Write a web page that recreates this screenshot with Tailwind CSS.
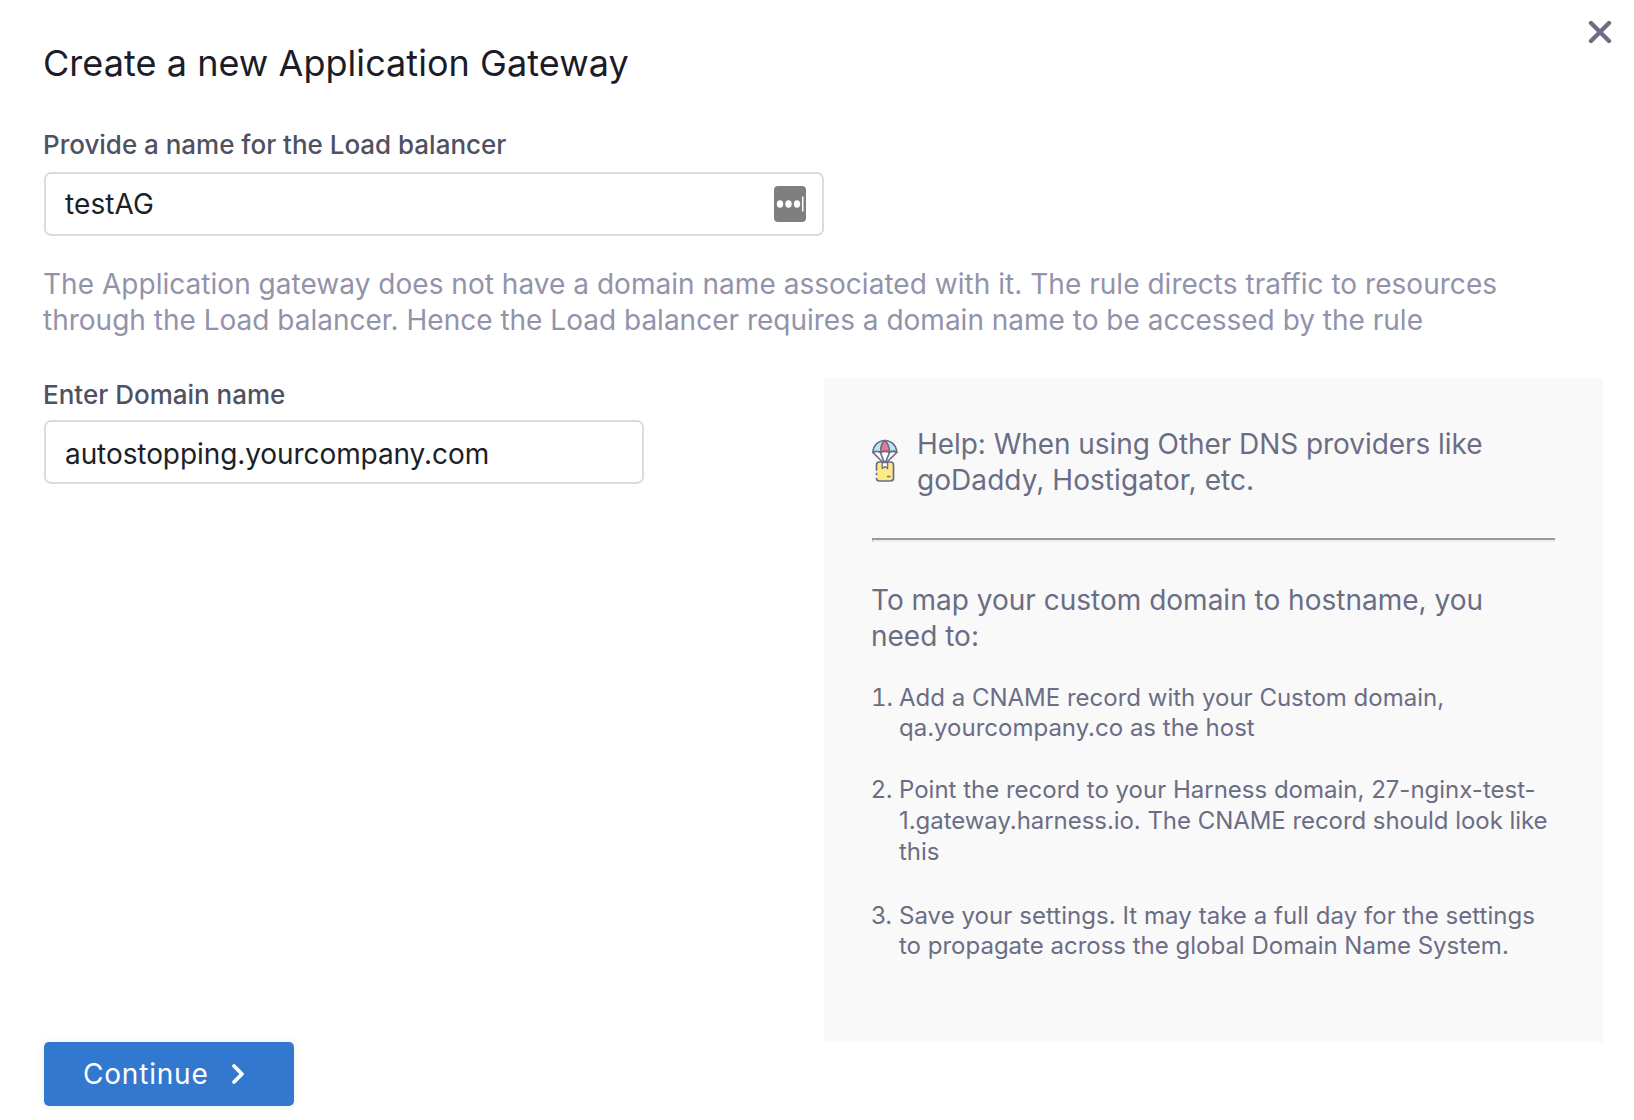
<!DOCTYPE html>
<html lang="en">
<head>
<meta charset="utf-8">
<title>Create a new Application Gateway</title>
<script src="https://cdn.jsdelivr.net/npm/@tailwindcss/browser@4"></script>
</head>
<body class="bg-white font-['Inter',sans-serif] text-[28px] leading-9 text-[#6b6d85]">
<main class="relative flex h-[1120px] w-[1634px] flex-col items-start overflow-hidden pl-11 pr-[30px] pt-[41px]">
  <button aria-label="Close" class="absolute right-[22px] top-5">
    <svg class="size-6" viewBox="0 0 24 24" fill="none" stroke="#6b6d85" stroke-width="4.4" stroke-linecap="round"><path d="M3 3 21 21M21 3 3 21"/></svg>
  </button>

  <h1 class="-ml-px text-[36px] leading-[44px] tracking-[0.05px] text-[#1c1c28]">Create a new Application Gateway</h1>

  <label class="-ml-px mt-11 text-[26px] font-medium leading-8 tracking-[-0.02px] text-[#4f5162]">Provide a name for the Load balancer</label>
  <div class="mt-[11px] flex h-16 w-[780px] items-center justify-between rounded-[7px] border-2 border-[#d9dae5] pl-[19px] pr-4 text-[#1c2127]">
    <span class="tracking-[0.1px]">testAG</span>
    <svg class="h-9 w-8" viewBox="0 0 32 36"><rect width="32" height="36" rx="4" fill="#7f7f7f"/><g fill="#fff"><ellipse cx="6" cy="18" rx="3.2" ry="3.8"/><ellipse cx="14.5" cy="18" rx="3.2" ry="3.8"/><ellipse cx="23" cy="18" rx="3.2" ry="3.8"/><rect x="28" y="10.500" width="1.500" height="15"/></g></svg>
  </div>

  <p class="-ml-px mt-[30px] text-[#9293ab]"><span class="tracking-[0.03px]">The Application gateway does not have a domain name associated with it. The rule directs traffic to resources</span><br>through the Load balancer. Hence the Load balancer requires a domain name to be accessed by the rule</p>

  <div class="mt-10 flex h-[664px] w-[1560px]">
    <div class="flex w-[780px] flex-col">
      <label class="-ml-px mt-px text-[26px] font-medium leading-8 text-[#4f5162]">Enter Domain name</label>
      <div class="mt-[9px] flex h-16 w-[600px] items-center rounded-[7px] border-2 border-[#d9dae5] pl-[19px] pt-1 tracking-[-0.08px] text-[#1c2127]">autostopping.yourcompany.com</div>
    </div>
    <aside class="w-[779px] shrink-0 bg-[#f9f9f9] px-12 pt-12">
      <div class="flex h-[72px] items-start">
        <svg class="mt-[13px] h-[44px] w-[26px] shrink-0" viewBox="0 0 26 44" fill="none" stroke="#6b6d85" stroke-width="1.700" stroke-linejoin="round" stroke-linecap="round">
          <path fill="#b9e9f8" d="M1 13.500C1 6.500 6.500 1.500 12.800 1.500s11.900 5 11.900 12c-2-1.300-5.200-1.300-7.200 0-2.500-1.300-6.500-1.300-9 0-2-1.300-5.500-1.300-7.500 0Z"/>
          <path fill="#f0788c" d="M8.500 13.500C8.500 8 10.500 3 12.800 1.500c2.500 1.500 4.700 6.500 4.700 12-2.500-1.300-6.500-1.300-9 0Z"/>
          <path fill="#fff" d="M1 13.500l9.500 9.500h4.500L24.700 13.500c-2-1.300-5.200-1.300-7.200 0-2.500-1.300-6.500-1.300-9 0-2-1.300-5.500-1.300-7.500 0Z"/>
          <path d="M8.500 13.500 12 23M17.500 13.500 13.700 23"/>
          <path fill="#fde986" stroke="none" d="M4.500 23h16.500v19H4.500z"/>
          <path d="M4.500 31v-5.500Q4.500 23 7.500 23h11q3 0 3 3v13q0 3-3 3h-11q-3 0-3-2.500M4.500 34.500v1"/>
          <path fill="#fff" stroke-width="1.300" d="M10.200 23.500v6l2.700-2 2.700 2v-6z"/>
          <path d="M15.800 37.500h2"/>
        </svg>
        <p class="ml-[19px] whitespace-nowrap"><span class="tracking-[-0.06px]">Help: When using Other DNS providers like</span><br><span class="tracking-[0.06px]">goDaddy, Hostigator, etc.</span></p>
      </div>
      <div class="mt-10 h-1 border-b-2 border-l border-t-2 border-b-[#eeeeee] border-l-[#9a9a9a] border-t-[#9a9a9a]"></div>
      <p class="-ml-px mt-10 whitespace-nowrap">To map your custom domain to hostname, you<br>need to:</p>
      <ol class="mt-[29px] whitespace-nowrap text-2xl">
        <li class="flex leading-[30px]"><span class="-ml-px w-7 shrink-0 tabular-nums">1.</span><span>Add a CNAME record with your Custom domain,<br>qa.yourcompany.co as the host</span></li>
        <li class="mt-[31px] flex leading-[31px]"><span class="-ml-px w-7 shrink-0">2.</span><span>Point the record to your Harness domain, 27-nginx-test-<br><span class="tracking-[-0.05px]">1.gateway.harness.io. The CNAME record should look like</span><br>this</span></li>
        <li class="mt-[34px] flex leading-[30px]"><span class="-ml-px w-7 shrink-0">3.</span><span><span class="tracking-[0.05px]">Save your settings. It may take a full day for the settings</span><br>to propagate across the global Domain Name System.</span></li>
      </ol>
    </aside>
  </div>

  <button class="flex h-16 w-[250px] shrink-0 items-center rounded-[5px] bg-[#3278cf] pl-[39px] tracking-[0.8px] text-white shadow-[0_0_8px_rgba(40,41,61,0.08)]">
    Continue
    <svg class="ml-[22px] h-[22px] w-[14px]" viewBox="0 0 14 22" fill="none" stroke="#fff" stroke-width="3.800" stroke-linecap="round" stroke-linejoin="round"><path d="M3 3l8 8-8 8"/></svg>
  </button>
</main>
</body>
</html>
